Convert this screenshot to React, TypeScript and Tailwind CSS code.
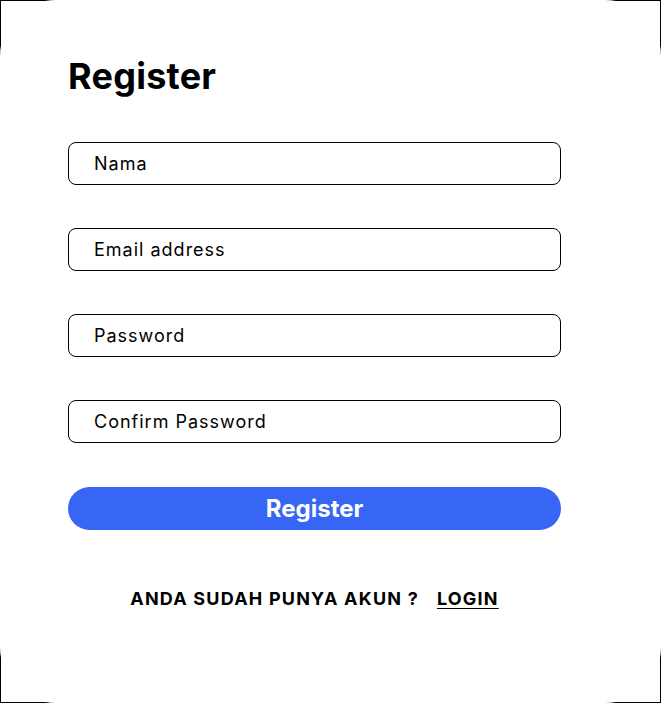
export default function App() {
  const fields = ["Nama", "Email address", "Password", "Confirm Password"];
  return (
    <div
      className="w-[661px] h-[703px] border border-black bg-white"
      style={{ fontFamily: "Inter, 'Noto Sans', sans-serif" }}
    >
      <div className="-m-px h-[703px] rounded-[56px] bg-white pl-[68px] pt-[54px]">
        <div className="w-[493px] flex flex-col">
          <h1 className="text-[36px] leading-[44px] font-bold text-black tracking-[0.25px]">Register</h1>
          <div className="mt-[44px] flex flex-col gap-[43px]">
            {fields.map((f) => (
              <div
                key={f}
                className="h-[43px] rounded-[8px] border border-black flex items-center pl-[25px] text-[18px] tracking-[1px] text-black"
              >
                {f}
              </div>
            ))}
          </div>
          <button className="mt-[44px] h-[43px] rounded-full bg-[#3866f4] text-white text-[24px] font-bold flex items-center justify-center">
            Register
          </button>
          <div className="mt-[55px] flex justify-center items-center gap-[18px] text-[18px] font-bold text-black tracking-[1.2px]">
            <span>ANDA SUDAH PUNYA AKUN ?</span>
            <span className="underline underline-offset-[3px]">LOGIN</span>
          </div>
        </div>
      </div>
    </div>
  );
}
